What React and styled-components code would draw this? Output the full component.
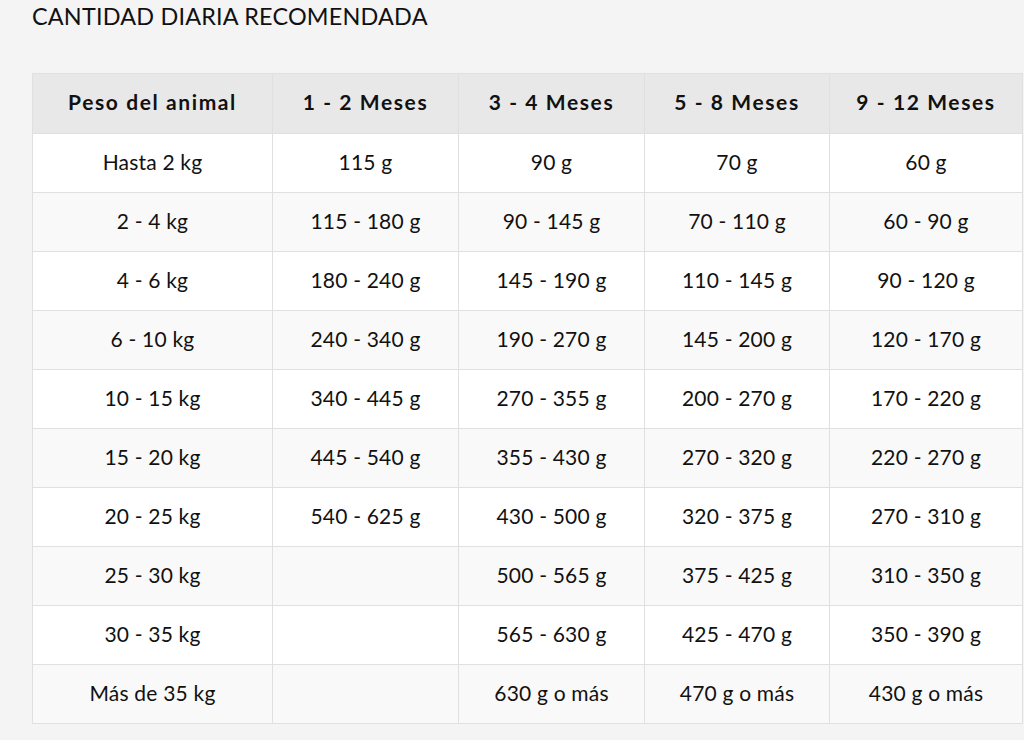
import React from "react";
import styled, { createGlobalStyle } from "styled-components";

const Global = createGlobalStyle`
  html, body { margin: 0; padding: 0; background: #f4f4f4; }
  body { font-family: Lato, "Open Sans", sans-serif; color: #111; }
`;

const Page = styled.div`
  padding: 0 2px 0 32px;
`;

const Title = styled.h2`
  margin: 0;
  padding-top: 2px;
  height: 73px;
  box-sizing: border-box;
  font-size: 23.4px;
  font-weight: 400;
  letter-spacing: 0.2px;
  text-transform: uppercase;
  color: #111;
`;

const Table = styled.table`
  width: 990px;
  border-collapse: collapse;
  table-layout: fixed;
  border: 1px solid #e0e0e0;
  background: #fff;
`;

const Th = styled.th`
  height: 54px;
  padding: 0 0 5px;
  background: #e8e8e8;
  border: 1px solid #e0e0e0;
  font-size: 21px;
  font-weight: 700;
  letter-spacing: 1.6px;
  text-align: center;
  color: #111;
`;

const Tr = styled.tr`
  background: ${(p) => (p.$alt ? "#f9f9f9" : "#fff")};
`;

const Td = styled.td`
  height: 54px;
  padding: 0 0 4px;
  border: 1px solid #e0e0e0;
  font-size: 21px;
  letter-spacing: 0.2px;
  text-align: center;
  color: #111;
`;

const headers = ["Peso del animal", "1 - 2 Meses", "3 - 4 Meses", "5 - 8 Meses", "9 - 12 Meses"];
const widths = [240, 186, 186, 185, 193];

const rows = [
  ["Hasta 2 kg", "115 g", "90 g", "70 g", "60 g"],
  ["2 - 4 kg", "115 - 180 g", "90 - 145 g", "70 - 110 g", "60 - 90 g"],
  ["4 - 6 kg", "180 - 240 g", "145 - 190 g", "110 - 145 g", "90 - 120 g"],
  ["6 - 10 kg", "240 - 340 g", "190 - 270 g", "145 - 200 g", "120 - 170 g"],
  ["10 - 15 kg", "340 - 445 g", "270 - 355 g", "200 - 270 g", "170 - 220 g"],
  ["15 - 20 kg", "445 - 540 g", "355 - 430 g", "270 - 320 g", "220 - 270 g"],
  ["20 - 25 kg", "540 - 625 g", "430 - 500 g", "320 - 375 g", "270 - 310 g"],
  ["25 - 30 kg", "", "500 - 565 g", "375 - 425 g", "310 - 350 g"],
  ["30 - 35 kg", "", "565 - 630 g", "425 - 470 g", "350 - 390 g"],
  ["Más de 35 kg", "", "630 g o más", "470 g o más", "430 g o más"],
];

export default function App() {
  return (
    <Page>
      <Global />
      <Title>Cantidad diaria recomendada</Title>
      <Table>
        <colgroup>
          {widths.map((w, i) => (
            <col key={i} style={{ width: w }} />
          ))}
        </colgroup>
        <thead>
          <tr>
            {headers.map((h) => (
              <Th key={h}>{h}</Th>
            ))}
          </tr>
        </thead>
        <tbody>
          {rows.map((r, i) => (
            <Tr key={i} $alt={i % 2 === 1}>
              {r.map((c, j) => (
                <Td key={j}>{c}</Td>
              ))}
            </Tr>
          ))}
        </tbody>
      </Table>
    </Page>
  );
}
